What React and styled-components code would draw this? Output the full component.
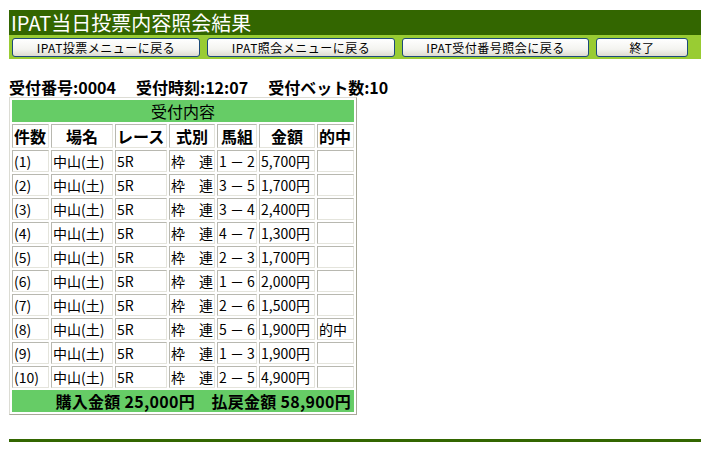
import React from 'react';
import styled, { createGlobalStyle } from 'styled-components';

const GlobalStyle = createGlobalStyle`
  html, body {
    margin: 0;
    padding: 0;
    background: #ffffff;
  }
  body {
    font-family: "Noto Sans CJK JP", "Liberation Sans", sans-serif;
    color: #000000;
  }
`;

const darkGreen = '#336600';
const lightGreen = '#99cc33';
const cellGreen = '#66cc66';

const Page = styled.div`
  width: 692px;
  padding: 10px 0 0 9px;
`;

const TitleBar = styled.div`
  height: 25px;
  background: ${darkGreen};
  color: #ffffff;
  font-size: 20px;
  line-height: 25px;
  padding-left: 2px;
  white-space: nowrap;
`;

const MenuBar = styled.div`
  height: 24px;
  background: ${lightGreen};
  display: flex;
  align-items: center;
  gap: 7px;
  padding-left: 3px;
`;

const MenuButton = styled.button`
  width: ${props => props.w}px;
  height: 19px;
  padding: 0;
  border: 1px solid #1c4a7a;
  border-radius: 3px;
  background: linear-gradient(#ffffff, #f4f4f0 60%, #dedbd0);
  font-family: "Noto Sans CJK JP", sans-serif;
  font-size: 12px;
  line-height: 17px;
  color: #000000;
  letter-spacing: 0.5px;
`;

const InfoLine = styled.div`
  margin-top: 18px;
  height: 20px;
  font-size: 16px;
  font-weight: bold;
  line-height: 20px;
  white-space: nowrap;
  display: flex;
  gap: 20px;
`;

const ResultTable = styled.table`
  width: 348px;
  table-layout: fixed;
  border-collapse: separate;
  border-spacing: 2px;
  border: 1px solid;
  border-color: #dcdcd4 #a8a898 #a8a898 #dcdcd4;
`;

const Cell = styled.td`
  box-sizing: border-box;
  height: ${props => (props.head ? 24 : 22)}px;
  padding: 0 1px;
  border: 1px solid;
  border-color: #b8b8b0 #e4e4dc #e4e4dc #b8b8b0;
  font-size: ${props => (props.head ? 16 : 14)}px;
  font-weight: ${props => (props.head ? 'bold' : 'normal')};
  text-align: ${props => props.align || 'left'};
  line-height: 20px;
  white-space: nowrap;
  overflow: hidden;
`;

const GreenCell = styled.td`
  box-sizing: border-box;
  height: 22px;
  padding: 0 2px;
  border: 1px solid ${cellGreen};
  background: ${cellGreen};
  font-size: 16px;
  font-weight: ${props => (props.bold ? 'bold' : 'normal')};
  text-align: ${props => props.align};
  line-height: 20px;
  white-space: nowrap;
  letter-spacing: ${props => (props.bold ? '0.3px' : '0')};
`;

const Rule = styled.div`
  margin-top: 24px;
  height: 3px;
  background: ${darkGreen};
`;

const colWidths = [37, 62, 52, 46, 40, 56, 37];

const rows = [
  ['(1)', '1', '2', '5,700円', ''],
  ['(2)', '3', '5', '1,700円', ''],
  ['(3)', '3', '4', '2,400円', ''],
  ['(4)', '4', '7', '1,300円', ''],
  ['(5)', '2', '3', '1,700円', ''],
  ['(6)', '1', '6', '2,000円', ''],
  ['(7)', '2', '6', '1,500円', ''],
  ['(8)', '5', '6', '1,900円', '的中'],
  ['(9)', '1', '3', '1,900円', ''],
  ['(10)', '2', '5', '4,900円', ''],
];

const headers = [
  ['件数', 'left'],
  ['場名', 'center'],
  ['レース', 'left'],
  ['式別', 'center'],
  ['馬組', 'center'],
  ['金額', 'center'],
  ['的中', 'left'],
];

export default function App() {
  return (
    <Page>
      <GlobalStyle />
      <TitleBar>IPAT当日投票内容照会結果</TitleBar>
      <MenuBar>
        <MenuButton w={188}>IPAT投票メニューに戻る</MenuButton>
        <MenuButton w={188}>IPAT照会メニューに戻る</MenuButton>
        <MenuButton w={187}>IPAT受付番号照会に戻る</MenuButton>
        <MenuButton w={92}>終了</MenuButton>
      </MenuBar>
      <InfoLine>
        <span>受付番号:0004</span>
        <span>受付時刻:12:07</span>
        <span>受付ベット数:10</span>
      </InfoLine>
      <ResultTable>
        <colgroup>
          {colWidths.map((w, i) => (
            <col key={i} style={{ width: w }} />
          ))}
        </colgroup>
        <tbody>
          <tr>
            <GreenCell colSpan={7} align="center">受付内容</GreenCell>
          </tr>
          <tr>
            {headers.map(([label, align]) => (
              <Cell key={label} head align={align}>{label}</Cell>
            ))}
          </tr>
          {rows.map(([no, a, b, amount, hit]) => (
            <tr key={no}>
              <Cell>{no}</Cell>
              <Cell>中山(土)</Cell>
              <Cell>5R</Cell>
              <Cell>枠　連</Cell>
              <Cell>{a} － {b}</Cell>
              <Cell>{amount}</Cell>
              <Cell>{hit}</Cell>
            </tr>
          ))}
          <tr>
            <GreenCell colSpan={7} align="right" bold>
              購入金額 25,000円　払戻金額 58,900円
            </GreenCell>
          </tr>
        </tbody>
      </ResultTable>
      <Rule />
    </Page>
  );
}
